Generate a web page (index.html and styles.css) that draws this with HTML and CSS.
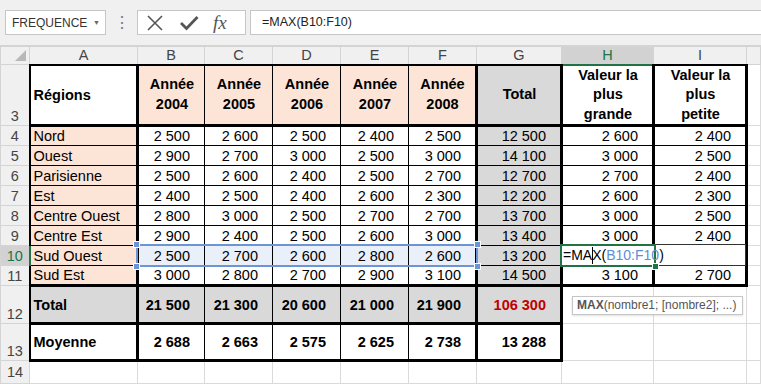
FILE: index.html
```html
<!DOCTYPE html>
<html>
<head>
    <title>Ventes par région</title>
    <link rel="stylesheet" href="styles.css">
</head>
<body>
    <div class="toolbar">
        <div class="namebox"><span>FREQUENCE</span><span class="arrow">&#9660;</span></div>
        <div class="dots">&#8942;</div>
        <div class="fbuttons">
            <svg class="ico" width="18" height="16" viewBox="0 0 18 16"><path d="M2 1 L16 15 M16 1 L2 15" stroke="#555" stroke-width="1.6" fill="none"/></svg>
            <svg class="ico" width="20" height="16" viewBox="0 0 20 16"><path d="M2 8 L7.5 13.5 L18.5 2" stroke="#555" stroke-width="2.8" fill="none"/></svg>
            <span class="fx">fx</span>
        </div>
        <div class="formula">=MAX(B10:F10)</div>
    </div>

    <div class="sheet">
        <table class="grid">
            <colgroup>
                <col class="w-rh"><col class="w-a"><col class="w-b"><col class="w-c"><col class="w-c"><col class="w-c"><col class="w-c"><col class="w-g"><col class="w-h"><col class="w-i"><col>
            </colgroup>
            <tr class="hh">
                <th class="corner"><span class="tri"></span></th><th>A</th><th>B</th><th>C</th><th>D</th><th>E</th><th>F</th><th>G</th><th class="cur-col">H</th><th>I</th><th></th>
            </tr>
            <tr class="r3">
                <th class="rh bot">3</th>
                <td class="t T L R B b lab">Régions</td>
                <td class="t T B pe b c">Année<br>2004</td>
                <td class="t T B pe b c">Année<br>2005</td>
                <td class="t T B pe b c">Année<br>2006</td>
                <td class="t T B pe b c">Année<br>2007</td>
                <td class="t T B R pe b c">Année<br>2008</td>
                <td class="t T B R gr b c">Total</td>
                <td class="t T B R b c">Valeur la<br>plus<br>grande</td>
                <td class="t T B R b c">Valeur la<br>plus<br>petite</td>
                <td></td>
            </tr>
            <tr class="rd">
                <th class="rh">4</th><td class="t L R pe">Nord</td>
                <td class="t n">2 500</td><td class="t n">2 600</td><td class="t n">2 500</td><td class="t n">2 400</td><td class="t n R">2 500</td>
                <td class="t n R gr">12 500</td><td class="t n R">2 600</td><td class="t n R">2 400</td><td></td>
            </tr>
            <tr class="rd">
                <th class="rh">5</th><td class="t L R pe">Ouest</td>
                <td class="t n">2 900</td><td class="t n">2 700</td><td class="t n">3 000</td><td class="t n">2 500</td><td class="t n R">3 000</td>
                <td class="t n R gr">14 100</td><td class="t n R">3 000</td><td class="t n R">2 500</td><td></td>
            </tr>
            <tr class="rd">
                <th class="rh">6</th><td class="t L R pe">Parisienne</td>
                <td class="t n">2 500</td><td class="t n">2 600</td><td class="t n">2 400</td><td class="t n">2 500</td><td class="t n R">2 700</td>
                <td class="t n R gr">12 700</td><td class="t n R">2 700</td><td class="t n R">2 400</td><td></td>
            </tr>
            <tr class="rd">
                <th class="rh">7</th><td class="t L R pe">Est</td>
                <td class="t n">2 400</td><td class="t n">2 500</td><td class="t n">2 400</td><td class="t n">2 600</td><td class="t n R">2 300</td>
                <td class="t n R gr">12 200</td><td class="t n R">2 600</td><td class="t n R">2 300</td><td></td>
            </tr>
            <tr class="rd">
                <th class="rh">8</th><td class="t L R pe">Centre Ouest</td>
                <td class="t n">2 800</td><td class="t n">3 000</td><td class="t n">2 500</td><td class="t n">2 700</td><td class="t n R">2 700</td>
                <td class="t n R gr">13 700</td><td class="t n R">3 000</td><td class="t n R">2 500</td><td></td>
            </tr>
            <tr class="rd">
                <th class="rh">9</th><td class="t L R pe">Centre Est</td>
                <td class="t n">2 900</td><td class="t n">2 400</td><td class="t n">2 500</td><td class="t n">2 600</td><td class="t n R">3 000</td>
                <td class="t n R gr">13 400</td><td class="t n R">3 000</td><td class="t n R">2 400</td><td></td>
            </tr>
            <tr class="rd">
                <th class="rh cur-row">10</th><td class="t L R pe">Sud Ouest</td>
                <td class="t n sel">2 500</td><td class="t n sel">2 700</td><td class="t n sel">2 600</td><td class="t n sel">2 800</td><td class="t n R sel">2 600</td>
                <td class="t n R gr">13 200</td><td class="t n R"></td><td class="t n R"></td><td></td>
            </tr>
            <tr class="rd">
                <th class="rh">11</th><td class="t L R B pe">Sud Est</td>
                <td class="t n B">3 000</td><td class="t n B">2 800</td><td class="t n B">2 700</td><td class="t n B">2 900</td><td class="t n R B">3 100</td>
                <td class="t n R B gr">14 500</td><td class="t n R B">3 100</td><td class="t n R B">2 700</td><td></td>
            </tr>
            <tr class="r12">
                <th class="rh bot">12</th><td class="t L R B gr b lab">Total</td>
                <td class="t n B gr b">21 500</td><td class="t n B gr b">21 300</td><td class="t n B gr b">20 600</td><td class="t n B gr b">21 000</td><td class="t n R B gr b">21 900</td>
                <td class="t n R B gr b red">106 300</td><td></td><td></td><td></td>
            </tr>
            <tr class="r13">
                <th class="rh bot">13</th><td class="t L R B b lab">Moyenne</td>
                <td class="t n B b">2 688</td><td class="t n B b">2 663</td><td class="t n B b">2 575</td><td class="t n B b">2 625</td><td class="t n R B b">2 738</td>
                <td class="t n R B b">13 288</td><td></td><td></td><td></td>
            </tr>
            <tr class="r14">
                <th class="rh">14</th><td></td><td></td><td></td><td></td><td></td><td></td><td></td><td></td><td></td><td></td>
            </tr>
        </table>

        <div class="range">
            <span class="hd h-tl"></span><span class="hd h-tr"></span><span class="hd h-bl"></span><span class="hd h-br"></span>
        </div>
        <div class="edit">
            <div class="active"></div>
            <span class="etext">=MA<span class="caret"></span>X(<span class="ref">B10:F10</span>)</span>
            <span class="fill"></span>
        </div>
        <div class="tip"><b>MAX</b>(nombre1; [nombre2]; ...)</div>
    </div>
</body>
</html>
```

FILE: styles.css
```css
body{margin:0;background:#fff;width:761px;height:384px;overflow:hidden;
    font-family:"Liberation Sans", Arial, sans-serif;color:#000;}

/* formula bar */
.toolbar{display:flex;align-items:flex-start;height:46px;box-sizing:border-box;
    padding:10px 0 0 5px;background:#f0f0f0;border-bottom:1px solid #d4d4d4;}

.namebox{width:101px;height:25px;box-sizing:border-box;border:1px solid #c6c6c6;background:#fff;
    display:flex;align-items:center;justify-content:space-between;padding:0 5px 0 6px;
    font-size:12px;color:#333;}
.arrow{font-size:7px;color:#666;}

.dots{width:31px;text-align:center;color:#777;font-size:16px;line-height:25px;}

.fbuttons{width:109px;height:25px;box-sizing:border-box;border:1px solid #c6c6c6;background:#fff;
    display:flex;align-items:center;padding-left:8px;gap:15px;}
.fx{font-family:"Liberation Serif", serif;font-style:italic;font-size:19px;color:#555;margin-left:-1px;}

.formula{flex:1;height:25px;box-sizing:border-box;margin-left:4px;border:1px solid #c6c6c6;border-right:none;
    background:#fff;padding-left:11px;font-size:12.5px;line-height:23px;color:#222;}

/* sheet */
.sheet{position:relative;}
.grid{border-collapse:collapse;table-layout:fixed;width:761px;}
.w-rh{width:29px;}
.w-a{width:108px;}
.w-b{width:67px;}
.w-c{width:68px;}
.w-g{width:85px;}
.w-h{width:92px;}
.w-i{width:93px;}

.grid th{background:#f0f0f0;color:#444;font-weight:normal;font-size:14.5px;
    border:1px solid #d4d4d4;padding:0;}
.grid td{border:1px solid #dadada;padding:0 2px 0 3px;font-size:14.5px;white-space:nowrap;overflow:hidden;}

.hh{height:18px;}
.r3{height:60px;}
.rd{height:20px;}
.r12{height:38px;}
.r13{height:37px;}
.r14{height:23px;}

.corner{position:relative;}
.tri{position:absolute;right:3px;bottom:3px;width:0;height:0;
    border-left:11px solid transparent;border-bottom:11px solid #b8b8b8;}
.cur-col{background:#d2d2d2 !important;color:#217346 !important;border-bottom:2px solid #217346 !important;}
.cur-row{background:#d2d2d2 !important;color:#217346 !important;border-right:2px solid #217346 !important;}
.rh.bot{vertical-align:bottom;padding-bottom:1px;}

/* cell styles */
.grid td.t{border:1px solid #000;}
.grid td.T{border-top:2px solid #000;}
.grid td.L{border-left:2px solid #000;}
.grid td.R{border-right:3px solid #000;}
.grid td.B{border-bottom:3px solid #000;}
.pe{background:#fce4d6;}
.gr{background:#d9d9d9;}
.sel{background:#eaf0fa;}
.b{font-weight:bold;}
.c{text-align:center;line-height:19.5px;}
.grid td.n{text-align:right;padding-right:14px;}
.red{color:#c00000;}

/* formula edit overlays */
.range{position:absolute;left:136px;top:198px;width:342px;height:23px;box-sizing:border-box;
    border:2px solid #6d95d6;}
.hd{position:absolute;width:5px;height:5px;background:#6d95d6;border:1px solid #fff;}
.h-tl{left:-5px;top:-5px;}
.h-tr{right:-5px;top:-5px;}
.h-bl{left:-5px;bottom:-5px;}
.h-br{right:-5px;bottom:-5px;}

.edit{position:absolute;left:560px;top:198px;width:186px;height:22px;box-sizing:border-box;
    background:#fff;border:1px solid #333;border-left:none;}
.active{position:absolute;left:0;top:-1px;width:96px;height:23px;box-sizing:border-box;
    border:2px solid #217346;}
.etext{position:absolute;left:3px;top:1px;font-size:14px;line-height:18px;white-space:nowrap;}
.ref{color:#5b8fd8;}
.caret{display:inline-block;width:1px;height:17px;background:#000;vertical-align:-4px;margin:0 -1px 0 0;}
.fill{position:absolute;left:92px;top:18px;width:5px;height:5px;background:#217346;border:1px solid #fff;}

.tip{position:absolute;left:572px;top:250px;width:171px;height:19px;box-sizing:border-box;
    border:1px solid #c6c6c6;background:#fff;box-shadow:0 1px 2px rgba(0,0,0,0.12);
    font-size:12px;line-height:17px;color:#555;padding-left:4px;white-space:nowrap;}
.tip b{color:#555;}
```
